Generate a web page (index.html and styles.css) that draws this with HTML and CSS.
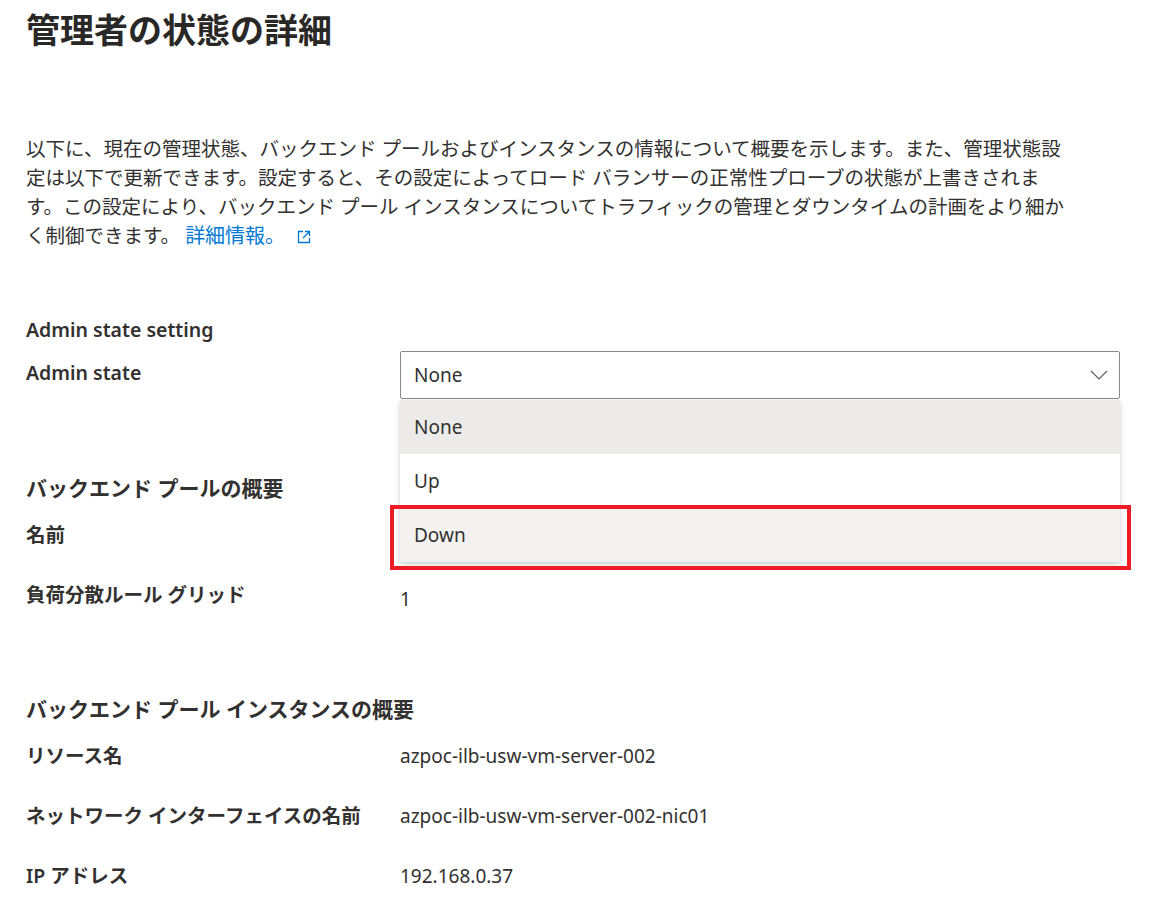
FILE: index.html
```html
<!DOCTYPE html>
<html lang="ja">
<head>
<meta charset="utf-8">
<title>管理者の状態の詳細</title>
<link rel="stylesheet" href="styles.css">
</head>
<body>
<main class="page">
  <h1 class="title">管理者の状態の詳細</h1>
  <p class="desc">以下に、現在の管理状態、バックエンド プールおよびインスタンスの情報について概要を示します。また、管理状態設定は以下で更新できます。設定すると、その設定によってロード バランサーの正常性プローブの状態が上書きされます。この設定により、バックエンド プール インスタンスについてトラフィックの管理とダウンタイムの計画をより細かく制御できます。 <a class="link" href="#">詳細情報。</a><svg class="ext" viewBox="0 0 14 14" width="14" height="14" aria-hidden="true"><path d="M6 1.5H1.5v11h11V8" fill="none" stroke="currentColor" stroke-width="1.3"/><path d="M8 1.5h4.5V6M12.5 1.5 6 8" fill="none" stroke="currentColor" stroke-width="1.3"/></svg></p>

  <section class="section s-admin">
    <h2 class="heading">Admin state setting</h2>
    <div class="row row-select">
      <div class="label">Admin state</div>
      <div class="select-wrap">
        <div class="select">
          <span>None</span>
          <svg class="chev" viewBox="0 0 18 10" width="18" height="10" aria-hidden="true"><path d="M1 1l8 8 8-8" fill="none" stroke="#605e5c" stroke-width="1.2"/></svg>
        </div>
        <ul class="menu">
          <li class="opt opt-selected">None</li>
          <li class="opt">Up</li>
          <li class="opt opt-hover">Down</li>
        </ul>
        <div class="highlight"></div>
      </div>
    </div>
  </section>

  <section class="section s-pool">
    <h2 class="heading heading-ja">バックエンド プールの概要</h2>
    <div class="row">
      <div class="label">名前</div>
      <div class="value"></div>
    </div>
    <div class="row">
      <div class="label">負荷分散ルール グリッド</div>
      <div class="value value-low">1</div>
    </div>
  </section>

  <section class="section s-inst">
    <h2 class="heading heading-ja">バックエンド プール インスタンスの概要</h2>
    <div class="row">
      <div class="label">リソース名</div>
      <div class="value">azpoc-ilb-usw-vm-server-002</div>
    </div>
    <div class="row">
      <div class="label">ネットワーク インターフェイスの名前</div>
      <div class="value">azpoc-ilb-usw-vm-server-002-nic01</div>
    </div>
    <div class="row">
      <div class="label">IP アドレス</div>
      <div class="value">192.168.0.37</div>
    </div>
  </section>
</main>
</body>
</html>
```

FILE: styles.css
```css
html, body {
  margin: 0;
  padding: 0;
  background: #ffffff;
}

body {
  font-family: "Noto Sans", "Noto Sans CJK JP", sans-serif;
  color: #323130;
}

.page {
  padding: 0 26px;
}

.title {
  margin: 9px 0 0;
  font-family: "Noto Sans CJK JP", sans-serif;
  font-size: 34px;
  line-height: 40px;
  font-weight: 700;
  color: #292827;
}

.desc {
  margin: 85px 0 0;
  width: 1050px;
  font-family: "Noto Sans", "Noto Sans CJK JP", sans-serif;
  font-size: 19.5px;
  line-height: 29px;
  color: #323130;
  font-weight: 400;
}

.link {
  color: #0078d4;
  text-decoration: none;
  font-size: 20px;
}

.ext {
  display: inline-block;
  vertical-align: -1px;
  margin-left: 12px;
  color: #0078d4;
}

.section {
  display: flex;
  flex-direction: column;
}

.s-admin { margin-top: 66px; }
.s-pool { margin-top: 75px; }
.s-inst { margin-top: 82px; }

.heading {
  margin: 0 0 19px;
  font-size: 19.5px;
  line-height: 28px;
  font-weight: 600;
  color: #323130;
}

.heading-ja {
  font-size: 21px;
}

.s-admin .heading {
  margin-bottom: 7px;
}

.row {
  display: grid;
  grid-template-columns: 374px 720px;
  align-items: start;
}

.row + .row {
  margin-top: 32px;
}

.label {
  font-size: 19.5px;
  line-height: 28px;
  font-weight: 600;
  color: #323130;
}

.value {
  font-size: 19px;
  line-height: 28px;
  font-weight: 400;
  color: #323130;
  min-height: 28px;
}

.value-low {
  padding-top: 4px;
}

.row-select .label {
  padding-top: 8px;
}

.select-wrap {
  position: relative;
}

.select {
  box-sizing: border-box;
  height: 48px;
  border: 1px solid #8a8886;
  border-radius: 2px;
  display: flex;
  align-items: center;
  justify-content: space-between;
  padding: 0 11px 0 13px;
  font-size: 19px;
  background: #fff;
}

.menu {
  position: absolute;
  left: 0;
  right: 0;
  top: 49px;
  margin: 0;
  padding: 0;
  list-style: none;
  background: #fff;
  box-shadow: 0 3px 7px rgba(0, 0, 0, 0.13), 0 1px 3px rgba(0, 0, 0, 0.1);
  z-index: 2;
}

.opt {
  height: 54px;
  display: flex;
  align-items: center;
  padding-left: 14px;
  font-size: 19px;
  color: #323130;
}

.opt-selected { background: #edebe9; }
.opt-hover { background: #f3f2f1; }

.highlight {
  position: absolute;
  left: -10px;
  top: 154px;
  width: 741px;
  height: 65px;
  box-sizing: border-box;
  border: 4px solid #ed1c24;
  z-index: 3;
}
```
